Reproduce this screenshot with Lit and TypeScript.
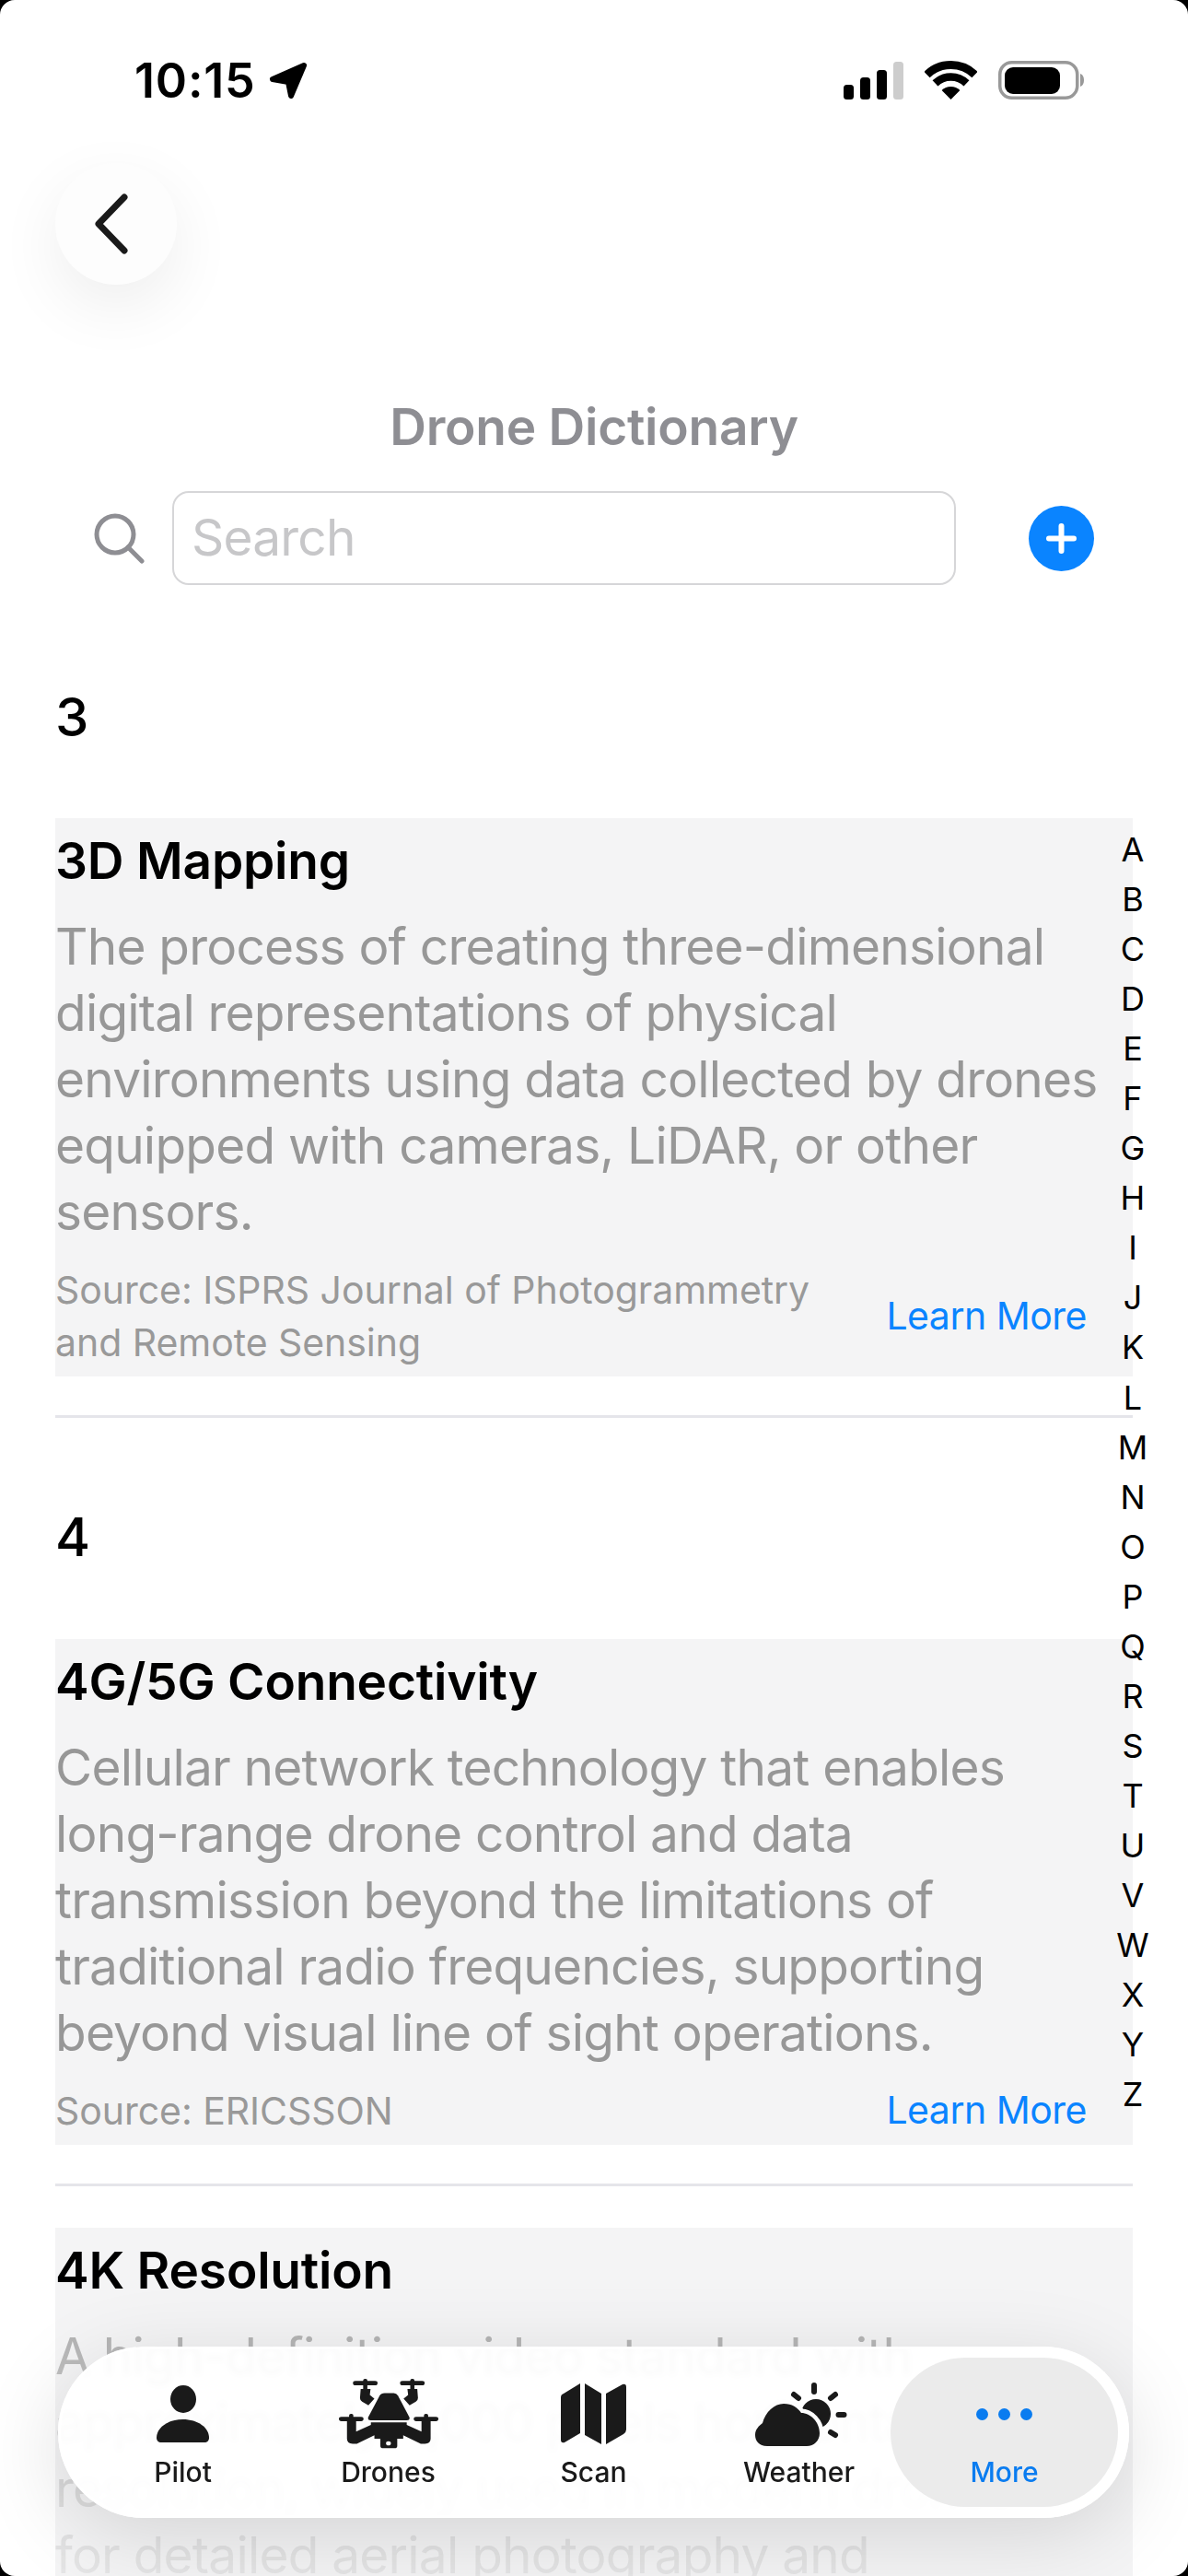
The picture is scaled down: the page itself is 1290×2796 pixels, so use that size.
import { LitElement, html, css, svg } from "lit";
import { customElement } from "lit/decorators.js";

interface Term {
	title: string;
	desc: string;
	source?: string;
	fade?: boolean;
}

const LETTERS = "ABCDEFGHIJKLMNOPQRSTUVWXYZ".split("");

const icons = {
	person: svg`<svg class="i-person" viewBox="0 0 57 62" fill="#1a1a1a"><ellipse cx="29" cy="15" rx="14" ry="15"/><path d="M0 57C0 46 12 37 28.500 37C45 37 57 46 57 57C57 60 55 62 52 62H5C2 62 0 60 0 57Z"/></svg>`,
	drone: svg`<svg class="i-drone" viewBox="802 125 283 230" preserveAspectRatio="none" fill="#1a1a1a">
		<rect x="842" y="132" width="70" height="14" rx="7"/><rect x="976" y="132" width="70" height="14" rx="7"/>
		<rect x="871" y="125" width="12" height="40" rx="5"/><rect x="1005" y="125" width="12" height="40" rx="5"/>
		<path d="M864 158H892L890 178L903 190L886 212L868 200Q862 196 862 188Z"/>
		<path d="M997 158H1025L1027 188Q1027 196 1021 200L1003 212L986 190L999 178Z"/>
		<path d="M932 172H958Q966 172 970 180L1002 250Q1006 261 996 261H892Q882 261 886 250L918 180Q922 172 932 172Z"/>
		<rect x="802" y="250" width="70" height="14" rx="7"/><rect x="1015" y="250" width="70" height="14" rx="7"/>
		<rect x="831" y="240" width="12" height="30" rx="5"/><rect x="1044" y="240" width="12" height="30" rx="5"/>
		<path d="M825 262H851V298L893 276V268H995V276L1037 298V262H1063V322Q1063 338 1047 338H1035L985 310V322H968V345Q968 353 960 353H928Q920 353 920 345V322H903V310L853 338H841Q825 338 825 322Z"/>
		<circle cx="943" cy="337" r="7" fill="#fdfdfd"/>
	</svg>`,
	map: svg`<svg class="i-map" viewBox="0 0 71 66" fill="#1a1a1a">
		<path d="M21 0V54L4 64Q0 65 0 61V15Q0 12 3 11Z"/>
		<path d="M26 0L44 11V66L26 56Z"/>
		<path d="M49 11L67 1Q71 0 71 4V50Q71 53 68 55L49 66Z"/>
	</svg>`,
	weather: svg`<svg class="i-weather" viewBox="0 0 104 74">
		<path d="M66 6V13M44 16L49 20M89 16L84 20M92.500 38H98.500M84 57L89 60" stroke="#1a1a1a" stroke-width="6" stroke-linecap="round"/>
		<circle cx="68" cy="37" r="16" fill="#1a1a1a"/>
		<path d="M15 72C6 72 2 66 2 60C2 54 6 50 10 47C13 35 23 26 33 26C42 26 48 30 52 36C62 36 72 46 72 58C72 66 66 72 58 72Z" fill="#1a1a1a" stroke="#fdfdfd" stroke-width="9" paint-order="stroke"/>
	</svg>`,
};

@customElement("app-root")
export class AppRoot extends LitElement {
	static styles = css`
		:host {
			display: block;
			height: 2796px;
			background: #000;
			font-family: Inter, "Noto Sans", sans-serif;
		}

		.screen {
			position: relative;
			height: 2796px;
			overflow: hidden;
			background: #fff;
			border-radius: 16px;
		}

		.status {
			display: flex;
			justify-content: space-between;
			align-items: center;
			height: 42px;
			padding: 66px 113px 69px 146px;
		}

		.clock {
			display: flex;
			align-items: center;
			gap: 14px;
			font-size: 52px;
			font-weight: 600;
			letter-spacing: 0.8px;
			color: #000;
		}

		.status-icons {
			display: flex;
			align-items: center;
			gap: 23px;
		}

		.back {
			display: flex;
			align-items: center;
			justify-content: center;
			width: 132px;
			height: 132px;
			margin-left: 60px;
			border-radius: 50%;
			background: #fdfdfd;
			box-shadow: 0 24px 70px rgba(0, 0, 0, 0.07);
		}

		.back svg {
			margin-right: 11px;
		}

		.page-title {
			margin-top: 120px;
			font-size: 55px;
			line-height: 68px;
			font-weight: 600;
			letter-spacing: -0.25px;
			text-align: center;
			color: #8e8e93;
		}

		.search-row {
			display: flex;
			align-items: center;
			margin: 36px 0 0 102px;
		}

		.search-box {
			box-sizing: border-box;
			width: 851px;
			height: 102px;
			margin: 0 79px 0 30px;
			padding-left: 19px;
			border: 2px solid #d6d6d8;
			border-radius: 18px;
			font-size: 55px;
			line-height: 97px;
			letter-spacing: -0.8px;
			color: #c7c7c9;
		}

		.add {
			display: flex;
			align-items: center;
			justify-content: center;
			width: 71px;
			height: 71px;
			border-radius: 50%;
			background: #0a84ff;
		}

		.letter {
			margin: 108px 0 75px 60px;
			font-size: 58px;
			line-height: 70px;
			font-weight: 500;
			color: #000;
		}

		.list {
			margin: 0 60px;
		}

		.term {
			padding: 13px 50px 8px 0;
			background: #f4f4f5;
		}

		.term-title {
			font-size: 55px;
			line-height: 66px;
			font-weight: 600;
			letter-spacing: -0.2px;
			color: #000;
		}

		.term-desc {
			margin: 24px -30px 21px 0;
			font-size: 55px;
			line-height: 72px;
			letter-spacing: -0.8px;
			white-space: pre-line;
			color: #979797;
		}

		.term-desc.fade {
			-webkit-mask-image: linear-gradient(
				to bottom,
				rgba(0, 0, 0, 0.72) 0,
				rgba(0, 0, 0, 0.26) 190px,
				rgba(0, 0, 0, 0.13) 290px
			);
			mask-image: linear-gradient(
				to bottom,
				rgba(0, 0, 0, 0.72) 0,
				rgba(0, 0, 0, 0.26) 190px,
				rgba(0, 0, 0, 0.13) 290px
			);
		}

		.term-foot {
			display: flex;
			align-items: center;
			justify-content: space-between;
		}

		.source {
			max-width: 840px;
			font-size: 41px;
			line-height: 57px;
			letter-spacing: -0.05px;
			color: #999;
		}

		.learn {
			margin-bottom: 3px;
			font-size: 41px;
			line-height: 54px;
			letter-spacing: -0.5px;
			color: #0a84ff;
		}

		hr {
			height: 3px;
			margin: 42px 0 0;
			border: 0;
			background: #e5e5ea;
		}

		.next {
			margin-top: 45px;
		}

		.list + .letter {
			margin: 94px 0 76px 60px;
		}

		.index {
			position: absolute;
			top: 895px;
			left: 1210px;
			width: 40px;
			font-size: 36px;
			line-height: 54.04px;
			text-align: center;
			color: #000;
		}

		.nav {
			position: absolute;
			left: 63px;
			top: 2547px;
			box-sizing: border-box;
			display: flex;
			width: 1163px;
			height: 186px;
			padding: 12px 11px 12px 24px;
			border-radius: 93px;
			background: rgba(255, 255, 255, 0.935);
			-webkit-backdrop-filter: blur(2.5px);
			backdrop-filter: blur(2.5px);
			box-shadow: inset 0 0 0 3px rgba(255, 255, 255, 0.8),
				0 20px 90px rgba(0, 0, 0, 0.13);
		}

		.tab {
			flex: 0 0 223px;
			display: flex;
			flex-direction: column;
			align-items: center;
			padding-top: 23px;
			font-size: 30px;
			font-weight: 500;
			line-height: 36px;
			color: #1a1a1a;
		}

		.tab.active {
			flex: 0 0 247px;
			margin-left: -12px;
			border-radius: 82px;
			background: #ebebeb;
			color: #0a7cf0;
		}

		.slot {
			display: flex;
			align-items: center;
			justify-content: center;
			height: 76px;
			margin-bottom: 7px;
		}

		.i-person { width: 57px; height: 62px; }
		.i-drone { width: 108px; height: 76px; }
		.i-map { width: 71px; height: 66px; }
		.i-weather { width: 104px; height: 74px; margin-left: 4px; }

		.dots {
			display: flex;
			gap: 11px;
		}

		.dots i {
			width: 13px;
			height: 13px;
			border-radius: 50%;
			background: #0a7cf0;
		}
	`;

	private renderTerm(t: Term) {
		return html`<div class="term">
			<div class="term-title">${t.title}</div>
			<div class="term-desc ${t.fade ? "fade" : ""}">${t.desc}</div>
			${t.source
				? html`<div class="term-foot">
						<div class="source">${t.source}</div>
						<div class="learn">Learn More</div>
				  </div>`
				: ""}
		</div>`;
	}

	render() {
		return html`<div class="screen">
			<div class="status">
				<div class="clock">
					10:15
					<svg width="42" height="41" viewBox="0 0 42 41" fill="#000">
						<path d="M38 4L4 19L21 22L24 37Z" stroke="#000" stroke-width="6" stroke-linejoin="round"/>
					</svg>
				</div>
				<div class="status-icons">
					<svg width="65" height="41" viewBox="0 0 65 41">
						<rect x="0" y="25" width="11" height="16" rx="3.500"/>
						<rect x="18" y="17" width="11" height="24" rx="3.500"/>
						<rect x="36" y="9" width="11" height="32" rx="3.500"/>
						<rect x="54" y="0" width="11" height="41" rx="3.500" fill="#cdcdcd"/>
					</svg>
					<svg width="57" height="42" viewBox="0 0 57 42" fill="none" stroke="#000">
						<path d="M2.500 15A37.500 37.500 0 0 1 54.500 15" stroke-width="9"/>
						<path d="M11.500 24.400A24.500 24.500 0 0 1 45.500 24.400" stroke-width="8.500"/>
						<path d="M28.500 42L18.600 32.100A14 14 0 0 1 38.400 32.100Z" fill="#000" stroke="none"/>
					</svg>
					<svg width="93" height="42" viewBox="0 0 93 42">
						<rect x="1.750" y="1.750" width="84" height="38.500" rx="13" fill="none" stroke="#999" stroke-width="3.500"/>
						<rect x="7" y="7" width="60" height="29" rx="9"/>
						<path d="M89 14C92 15 93 18 93 21C93 24 92 27 89 28Z" fill="#999"/>
					</svg>
				</div>
			</div>

			<div class="back">
				<svg width="36" height="66" viewBox="0 0 36 66" fill="none" stroke="#1a1a1a" stroke-width="7" stroke-linecap="round" stroke-linejoin="round">
					<path d="M32 4L4 33L32 62"/>
				</svg>
			</div>

			<div class="page-title">Drone Dictionary</div>

			<div class="search-row">
				<svg width="55" height="55" viewBox="0 0 55 55" fill="none" stroke="#8e8e93" stroke-width="5" stroke-linecap="round">
					<circle cx="23" cy="23" r="20"/>
					<path d="M37 37L52 52"/>
				</svg>
				<div class="search-box">Search</div>
				<div class="add">
					<svg width="35" height="35" viewBox="0 0 35 35" stroke="#fff" stroke-width="6" stroke-linecap="round">
						<path d="M17.500 4V31M4 17.500H31"/>
					</svg>
				</div>
			</div>

			<div class="letter">3</div>
			<div class="list">
				${this.renderTerm({
					title: "3D Mapping",
					desc: "The process of creating three-dimensional digital representations of physical environments using data collected by drones equipped with cameras, LiDAR, or other sensors.",
					source: "Source: ISPRS Journal of Photogrammetry and Remote Sensing",
				})}
				<hr />
			</div>

			<div class="letter">4</div>
			<div class="list">
				${this.renderTerm({
					title: "4G/5G Connectivity",
					desc: "Cellular network technology that enables long-range drone control and data transmission beyond the limitations of traditional radio frequencies, supporting beyond visual line of sight operations.",
					source: "Source: ERICSSON",
				})}
				<hr />
				<div class="next">
					${this.renderTerm({
						title: "4K Resolution",
						desc: "A high-definition video standard with approximately 4,000 pixels horizontal resolution, widely used in modern drones\nfor detailed aerial photography and",
						fade: true,
					})}
				</div>
			</div>

			<div class="index">${LETTERS.map((l) => html`<div>${l}</div>`)}</div>

			<div class="nav">
				<div class="tab"><div class="slot">${icons.person}</div>Pilot</div>
				<div class="tab"><div class="slot">${icons.drone}</div>Drones</div>
				<div class="tab"><div class="slot">${icons.map}</div>Scan</div>
				<div class="tab"><div class="slot">${icons.weather}</div>Weather</div>
				<div class="tab active">
					<div class="slot"><div class="dots"><i></i><i></i><i></i></div></div>
					More
				</div>
			</div>
		</div>`;
	}
}
